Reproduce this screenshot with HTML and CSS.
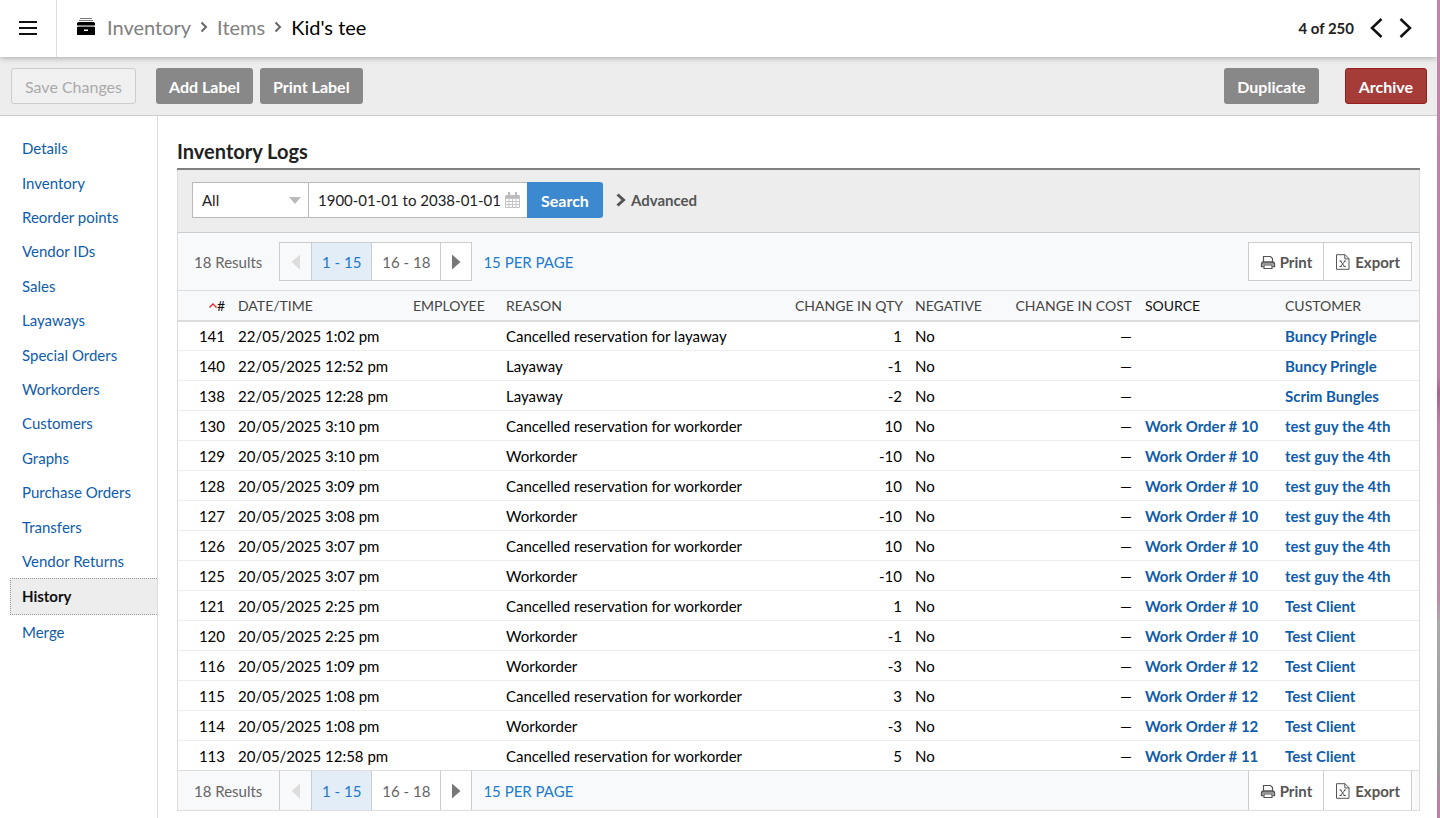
FILE: index.html
```html
<!DOCTYPE html>
<html lang="en">
<head>
    <meta charset="UTF-8">
    <meta name="viewport" content="width=device-width, initial-scale=1.0">
    <title>Kid's tee - Inventory Logs</title>
    <link rel="stylesheet" href="styles.css">
</head>
<body>
    <svg class="sprite" aria-hidden="true">
        <symbol id="i-prev" viewBox="0 0 10 16"><path d="M9 .5v15L.5 8z" fill="currentColor"/></symbol>
        <symbol id="i-next" viewBox="0 0 10 16"><path d="M1 .5v15L9.500 8z" fill="currentColor"/></symbol>
        <symbol id="i-print" viewBox="0 0 16 16">
            <path d="M3.500 8V2.500h7l2 2V8" fill="none" stroke="currentColor" stroke-width="1.200"/>
            <path d="M3.500 12.500H1.600V10a2 2 0 0 1 2-2h8.800a2 2 0 0 1 2 2v2.500h-1.900" fill="none" stroke="currentColor" stroke-width="1.500"/>
            <path d="M2 8h12v2.500H2z" fill="currentColor" opacity=".6"/>
            <path d="M4 11h8v3.500H4z" fill="#fff" stroke="currentColor" stroke-width="1.200"/>
        </symbol>
        <symbol id="i-export" viewBox="0 0 16 16">
            <path d="M1.500.7h8.500l4 4v10.600H1.500zM9.800.7v4.200H14" fill="none" stroke="currentColor"/>
            <path d="M5.500 7l4 5.500M10 7l-4.500 5.500M4.500 7h2.200M8.800 7H11M4.500 12.500h2.200M8.500 12.500h2.300" fill="none" stroke="currentColor"/>
        </symbol>
    </svg>

    <header class="topbar">
        <button class="menu" type="button" aria-label="Menu">
            <svg width="18" height="14" viewBox="0 0 18 14"><path d="M0 1h18M0 7h18M0 13h18" stroke="#111" stroke-width="2"/></svg>
        </button>
        <nav class="crumbs" aria-label="Breadcrumb">
            <svg class="drawer" width="18" height="17" viewBox="0 0 18 17">
                <path d="M3 .5h12M2 2.500h14" stroke="#777"/>
                <path d="M1.500 4h15l1.500 1v2.500H0V5zM0 9h18v8H0z" fill="#000"/>
                <path d="M1 8.500h16" stroke="#999"/>
                <path d="M7 11.500h4v1.500H7z" fill="#fff"/>
            </svg>
            <a href="#">Inventory</a>
            <svg width="8" height="12" viewBox="0 0 8 12"><path d="M1.500 1.500L6 6l-4.500 4.500" fill="none" stroke="#666" stroke-width="2"/></svg>
            <a href="#">Items</a>
            <svg width="8" height="12" viewBox="0 0 8 12"><path d="M1.500 1.500L6 6l-4.500 4.500" fill="none" stroke="#666" stroke-width="2"/></svg>
            <span class="current">Kid's tee</span>
        </nav>
        <div class="record-nav">
            <span>4 of 250</span>
            <button type="button" aria-label="Previous item"><svg width="13" height="20" viewBox="0 0 13 20"><path d="M11.500 1L2 10l9.500 9" fill="none" stroke="#111" stroke-width="2.500"/></svg></button>
            <button type="button" aria-label="Next item"><svg width="13" height="20" viewBox="0 0 13 20"><path d="M1.500 1L11 10l-9.500 9" fill="none" stroke="#111" stroke-width="2.500"/></svg></button>
        </div>
    </header>

    <div class="toolbar">
        <button class="btn btn-save" type="button" disabled>Save Changes</button>
        <button class="btn" type="button">Add Label</button>
        <button class="btn" type="button">Print Label</button>
        <button class="btn btn-duplicate" type="button">Duplicate</button>
        <button class="btn btn-archive" type="button">Archive</button>
    </div>

    <div class="layout">
        <nav class="sidebar" aria-label="Item sections">
            <ul>
                <li><a href="#">Details</a></li>
                <li><a href="#">Inventory</a></li>
                <li><a href="#">Reorder points</a></li>
                <li><a href="#">Vendor IDs</a></li>
                <li><a href="#">Sales</a></li>
                <li><a href="#">Layaways</a></li>
                <li><a href="#">Special Orders</a></li>
                <li><a href="#">Workorders</a></li>
                <li><a href="#">Customers</a></li>
                <li><a href="#">Graphs</a></li>
                <li><a href="#">Purchase Orders</a></li>
                <li><a href="#">Transfers</a></li>
                <li><a href="#">Vendor Returns</a></li>
                <li class="active"><a href="#">History</a></li>
                <li><a href="#">Merge</a></li>
            </ul>
        </nav>

        <main class="content">
            <h1>Inventory Logs</h1>
            <div class="listing">
                <form class="search">
                    <select aria-label="Reason">
                        <option>All</option>
                    </select>
                    <div class="date-field">
                        <input type="text" value="1900-01-01 to 2038-01-01" aria-label="Date range">
                        <svg width="15" height="16" viewBox="0 0 15 16"><path d="M.5 3.500h14v12H.5zM.5 6.500h14M.5 9.500h14M.5 12.500h14M4 6v9.500M7.500 6v9.500M11 6v9.500" fill="none" stroke="#c4c4c4"/><path d="M1 3h13v3H1zM3 0h2v4H3zM10 0h2v4h-2z" fill="#bbb"/></svg>
                    </div>
                    <button class="btn-search" type="button">Search</button>
                    <button class="advanced" type="button">
                        <svg width="10" height="14" viewBox="0 0 10 14"><path d="M1.500 1.500L7.500 7l-6 5.500" fill="none" stroke="#555" stroke-width="3"/></svg>
                        Advanced
                    </button>
                </form>

                <div class="pager">
                    <span class="results">18 Results</span>
                    <div class="group">
                        <button class="arrow" type="button" aria-label="Previous page" disabled><svg width="10" height="16"><use href="#i-prev"/></svg></button>
                        <button class="page selected" type="button">1 - 15</button>
                        <button class="page" type="button">16 - 18</button>
                        <button class="arrow" type="button" aria-label="Next page"><svg width="10" height="16"><use href="#i-next"/></svg></button>
                    </div>
                    <a class="per-page" href="#">15 PER PAGE</a>
                    <div class="group actions">
                        <button type="button"><svg width="16" height="16"><use href="#i-print"/></svg>Print</button>
                        <button type="button"><svg width="16" height="16"><use href="#i-export"/></svg>Export</button>
                    </div>
                </div>

                <table>
                    <colgroup>
                        <col class="c-id"><col class="c-date"><col class="c-employee"><col class="c-reason"><col class="c-qty"><col class="c-negative"><col class="c-cost"><col class="c-source"><col class="c-customer">
                    </colgroup>
                    <thead>
                        <tr>
                            <th class="num sorted"><svg width="8" height="5" viewBox="0 0 8 5"><path d="M.5 4.500L4 1l3.500 3.500" fill="none" stroke="#e8232c" stroke-width="1.300"/></svg>#</th>
                            <th>DATE/TIME</th>
                            <th>EMPLOYEE</th>
                            <th>REASON</th>
                            <th class="num">CHANGE IN QTY</th>
                            <th>NEGATIVE</th>
                            <th class="num">CHANGE IN COST</th>
                            <th class="source">SOURCE</th>
                            <th>CUSTOMER</th>
                        </tr>
                    </thead>
                    <tbody id="logs"></tbody>
                </table>

                <div class="pager pager-bottom">
                    <span class="results">18 Results</span>
                    <div class="group">
                        <button class="arrow" type="button" aria-label="Previous page" disabled><svg width="10" height="16"><use href="#i-prev"/></svg></button>
                        <button class="page selected" type="button">1 - 15</button>
                        <button class="page" type="button">16 - 18</button>
                        <button class="arrow" type="button" aria-label="Next page"><svg width="10" height="16"><use href="#i-next"/></svg></button>
                    </div>
                    <a class="per-page" href="#">15 PER PAGE</a>
                    <div class="group actions">
                        <button type="button"><svg width="16" height="16"><use href="#i-print"/></svg>Print</button>
                        <button type="button"><svg width="16" height="16"><use href="#i-export"/></svg>Export</button>
                    </div>
                </div>
            </div>
        </main>
    </div>

    <script>
        // id, date, reason, qty, work order, customer
        var logs = [
            [141, "22/05/2025 1:02 pm", "Cancelled reservation for layaway", 1, "", "Buncy Pringle"],
            [140, "22/05/2025 12:52 pm", "Layaway", -1, "", "Buncy Pringle"],
            [138, "22/05/2025 12:28 pm", "Layaway", -2, "", "Scrim Bungles"],
            [130, "20/05/2025 3:10 pm", "Cancelled reservation for workorder", 10, 10, "test guy the 4th"],
            [129, "20/05/2025 3:10 pm", "Workorder", -10, 10, "test guy the 4th"],
            [128, "20/05/2025 3:09 pm", "Cancelled reservation for workorder", 10, 10, "test guy the 4th"],
            [127, "20/05/2025 3:08 pm", "Workorder", -10, 10, "test guy the 4th"],
            [126, "20/05/2025 3:07 pm", "Cancelled reservation for workorder", 10, 10, "test guy the 4th"],
            [125, "20/05/2025 3:07 pm", "Workorder", -10, 10, "test guy the 4th"],
            [121, "20/05/2025 2:25 pm", "Cancelled reservation for workorder", 1, 10, "Test Client"],
            [120, "20/05/2025 2:25 pm", "Workorder", -1, 10, "Test Client"],
            [116, "20/05/2025 1:09 pm", "Workorder", -3, 12, "Test Client"],
            [115, "20/05/2025 1:08 pm", "Cancelled reservation for workorder", 3, 12, "Test Client"],
            [114, "20/05/2025 1:08 pm", "Workorder", -3, 12, "Test Client"],
            [113, "20/05/2025 12:58 pm", "Cancelled reservation for workorder", 5, 11, "Test Client"]
        ];

        document.getElementById("logs").innerHTML = logs.map(function(l){
            var source = l[4] ? '<a href="#">Work Order # ' + l[4] + '</a>' : '';

            return '<tr><td class="num">' + l[0] + '</td><td>' + l[1] + '</td><td></td><td>' + l[2] +
                '</td><td class="num">' + l[3] + '</td><td>No</td><td class="num">—</td><td>' + source +
                '</td><td><a href="#">' + l[5] + '</a></td></tr>';
        }).join("");
    </script>
</body>
</html>
```
FILE: styles.css
```css
* {
    box-sizing: border-box;
}
body {
    margin: 0;
    min-height: 100vh;
    display: flex;
    flex-direction: column;
    border-right: 3px solid #c47da6;
    border-image: linear-gradient(#c583ab 0%, #c47da6 46%, #a8648c 48%, #c47da6 52%, #c08aa8 73%, #aaa 76%, #999 94%, #c47da6 98%) 1;
    border-image-width: 0 3px 0 0;
    background-color: #fff;
    color: #000;
    font-family: Lato, "Liberation Sans", sans-serif;
    font-size: 15px;
    font-variant-ligatures: none;
}
a {
    color: #0f5cab;
    text-decoration: none;
}
button,
input,
select {
    margin: 0;
    font: inherit;
}
button {
    padding: 0;
    border: 0;
    background: none;
    color: inherit;
    white-space: nowrap;
    cursor: pointer;
}
svg {
    flex: none;
}
.sprite {
    display: none;
}

/* top bar */
.topbar {
    position: relative;
    display: flex;
    align-items: center;
    height: 57px;
    background-color: #fff;
    box-shadow: 0 1px 6px rgba(0, 0, 0, 0.3);
}
.menu {
    display: flex;
    align-items: center;
    justify-content: center;
    width: 57px;
    height: 57px;
    padding-bottom: 2px;
    border-right: 1px solid #ddd;
}
.crumbs {
    display: flex;
    align-items: center;
    gap: 9px;
    padding: 0 0 4px 20px;
    font-size: 20px;
}
.crumbs a {
    color: #808080;
}
.drawer {
    margin-right: 3px;
}
.record-nav {
    display: flex;
    align-items: center;
    gap: 16px;
    margin-left: auto;
    padding: 0 25px 2px 0;
    font-weight: bold;
    color: #222;
}
.record-nav button {
    display: flex;
}

/* toolbar */
.toolbar {
    display: flex;
    gap: 7px;
    padding: 11px 10px 11px 11px;
    border-bottom: 1px solid #ccc;
    background-color: #ededed;
}
.btn {
    height: 36px;
    padding: 0 13px;
    border-radius: 3px;
    background-color: #888;
    color: #fff;
    font-size: 16px;
    font-weight: bold;
}
.btn-save {
    margin-right: 13px;
    border: 1px solid #ccc;
    background-color: #f0f0f0;
    color: #aaa;
    font-weight: normal;
}
.btn-duplicate {
    margin-left: auto;
}
.btn-archive {
    margin-left: 19px;
    border: 1px solid #97201f;
    background-color: #a63c38;
}

/* sidebar */
.layout {
    display: flex;
    flex: 1;
}
.sidebar {
    flex: none;
    width: 158px;
    padding: 15px 0 0 10px;
    border-right: 1px solid #ddd;
}
.sidebar ul {
    display: flex;
    flex-direction: column;
    min-height: 518px;
    margin: 0;
    padding: 0;
    list-style: none;
}
.sidebar li {
    display: flex;
    flex: 1;
    align-items: center;
    padding-left: 12px;
}
.sidebar .active {
    padding-left: 11px;
    border: 1px dotted #999;
    border-right: 0;
    background-color: #ededed;
}
.active a {
    color: #111;
    font-weight: bold;
}

/* content */
.content {
    flex: 1;
    min-width: 0;
    padding: 23px 17px 8px 19px;
}
h1 {
    margin: 0;
    padding-bottom: 5px;
    border-bottom: 2px solid #808080;
    color: #222;
    font-size: 20px;
    line-height: 24px;
}
.listing {
    border: 1px solid #ddd;
    border-top: 0;
}
.search {
    display: flex;
    align-items: center;
    padding: 12px 14px 14px;
    border-bottom: 1px solid #ccc;
    background-color: #ededed;
}
.search select {
    width: 117px;
    height: 36px;
    padding: 0 9px;
    border: 1px solid #bbb;
    border-radius: 0;
    appearance: none;
    background: #fff url("data:image/svg+xml,%3Csvg xmlns='http://www.w3.org/2000/svg' width='12' height='7'%3E%3Cpath d='M0 0h12L6 7z' fill='%23bbb'/%3E%3C/svg%3E") no-repeat right 7px center;
    color: #222;
}
.date-field {
    display: flex;
    align-items: center;
    width: 218px;
    height: 36px;
    padding-right: 7px;
    border: 1px solid #bbb;
    border-width: 1px 0;
    background-color: #fff;
}
.date-field input {
    flex: 1;
    min-width: 0;
    padding: 0 0 0 9px;
    border: 0;
    outline: 0;
    background: none;
    color: #222;
}
.btn-search {
    height: 36px;
    padding: 0 14px;
    border-radius: 0 3px 3px 0;
    background-color: #3c89d0;
    color: #fff;
    font-size: 16px;
    font-weight: bold;
}
.advanced {
    display: flex;
    align-items: center;
    gap: 5px;
    margin-left: 13px;
    color: #555;
    font-weight: bold;
}

/* pager */
.pager {
    display: flex;
    align-items: center;
    padding: 9px 7px 9px 16px;
    background-color: #f8f9fa;
    color: #666;
}
.results {
    width: 85px;
}
.group {
    display: flex;
    border: 1px solid #ccc;
    background-color: #fff;
}
.group button {
    display: flex;
    align-items: center;
    justify-content: center;
    height: 37px;
    border-left: 1px solid #ccc;
}
.group button:first-child {
    border-left: 0;
}
.group .arrow {
    width: 31px;
    color: #777;
}
.group .arrow:disabled {
    background-color: #f8f9fa;
    color: #ddd;
}
.group .page {
    padding: 0 10px;
}
.group .selected {
    background-color: #e2edf8;
    color: #2079cc;
}
.per-page {
    margin-left: 11px;
    color: #1a7bd0;
}
.actions {
    margin-left: auto;
    color: #555;
    font-weight: bold;
}
.actions button {
    gap: 4px;
    padding: 0 11px;
}
.pager-bottom {
    padding-top: 0;
    padding-bottom: 0;
}
.pager-bottom .group {
    border-width: 0 1px;
}
.pager-bottom .group button {
    height: 39px;
}

/* table */
table {
    width: 100%;
    border-collapse: collapse;
    table-layout: fixed;
}
th,
td {
    height: 30px;
    padding: 0 0 0 13px;
    border-bottom: 1px solid #eee;
    text-align: left;
    white-space: nowrap;
}
th {
    border-top: 1px solid #ddd;
    border-bottom: 2px solid #ddd;
    background-color: #f8f9fa;
    color: #444;
    font-size: 14px;
    font-weight: normal;
}
tr:last-child td {
    border-bottom: 1px solid #ddd;
}
td a {
    font-weight: bold;
}
.num {
    text-align: right;
}
.sorted,
.source {
    color: #111;
}
.sorted svg {
    vertical-align: 3px;
}
.c-id {
    width: 47px;
}
.c-date {
    width: 175px;
}
.c-employee {
    width: 93px;
}
.c-qty {
    width: 120px;
}
.c-negative {
    width: 90px;
}
.c-cost {
    width: 140px;
}
.c-source {
    width: 140px;
}
.c-customer {
    width: 147px;
}
```
